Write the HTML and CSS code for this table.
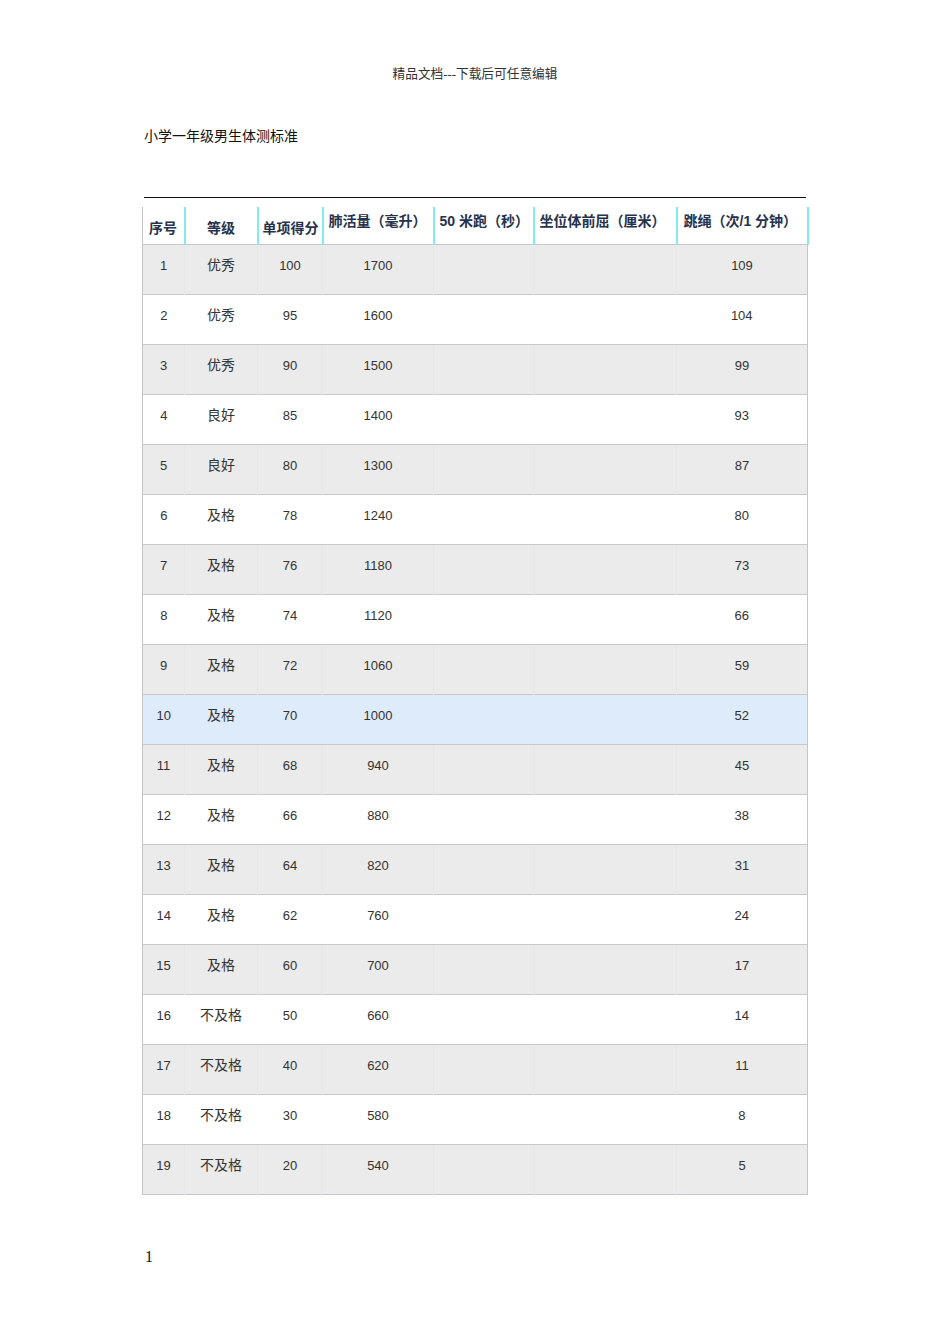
FILE: index.html
```html
<!DOCTYPE html>
<html lang="zh">
<head>
<meta charset="utf-8">
<title>小学一年级男生体测标准</title>
<link rel="stylesheet" href="styles.css">
</head>
<body>
<div class="page">
  <div class="doc-header">精品文档---下载后可任意编辑</div>
  <h1 class="title">小学一年级男生体测标准</h1>
  <div class="rule"></div>
  <table class="grid">
    <colgroup>
      <col class="c1"><col class="c2"><col class="c3"><col class="c4"><col class="c5"><col class="c6"><col class="c7">
    </colgroup>
    <thead>
      <tr>
        <th class="low first">序号</th>
        <th class="low center">等级</th>
        <th class="low">单项得分</th>
        <th>肺活量（毫升）</th>
        <th>50 米跑（秒）</th>
        <th>坐位体前屈（厘米）</th>
        <th class="last">跳绳（次/1 分钟）</th>
      </tr>
    </thead>
    <tbody>
      <tr class="odd"><td>1</td><td class="cjk">优秀</td><td>100</td><td>1700</td><td></td><td></td><td>109</td></tr>
      <tr><td>2</td><td class="cjk">优秀</td><td>95</td><td>1600</td><td></td><td></td><td>104</td></tr>
      <tr class="odd"><td>3</td><td class="cjk">优秀</td><td>90</td><td>1500</td><td></td><td></td><td>99</td></tr>
      <tr><td>4</td><td class="cjk">良好</td><td>85</td><td>1400</td><td></td><td></td><td>93</td></tr>
      <tr class="odd"><td>5</td><td class="cjk">良好</td><td>80</td><td>1300</td><td></td><td></td><td>87</td></tr>
      <tr><td>6</td><td class="cjk">及格</td><td>78</td><td>1240</td><td></td><td></td><td>80</td></tr>
      <tr class="odd"><td>7</td><td class="cjk">及格</td><td>76</td><td>1180</td><td></td><td></td><td>73</td></tr>
      <tr><td>8</td><td class="cjk">及格</td><td>74</td><td>1120</td><td></td><td></td><td>66</td></tr>
      <tr class="odd"><td>9</td><td class="cjk">及格</td><td>72</td><td>1060</td><td></td><td></td><td>59</td></tr>
      <tr class="hl"><td>10</td><td class="cjk">及格</td><td>70</td><td>1000</td><td></td><td></td><td>52</td></tr>
      <tr class="odd"><td>11</td><td class="cjk">及格</td><td>68</td><td>940</td><td></td><td></td><td>45</td></tr>
      <tr><td>12</td><td class="cjk">及格</td><td>66</td><td>880</td><td></td><td></td><td>38</td></tr>
      <tr class="odd"><td>13</td><td class="cjk">及格</td><td>64</td><td>820</td><td></td><td></td><td>31</td></tr>
      <tr><td>14</td><td class="cjk">及格</td><td>62</td><td>760</td><td></td><td></td><td>24</td></tr>
      <tr class="odd"><td>15</td><td class="cjk">及格</td><td>60</td><td>700</td><td></td><td></td><td>17</td></tr>
      <tr><td>16</td><td class="cjk">不及格</td><td>50</td><td>660</td><td></td><td></td><td>14</td></tr>
      <tr class="odd"><td>17</td><td class="cjk">不及格</td><td>40</td><td>620</td><td></td><td></td><td>11</td></tr>
      <tr><td>18</td><td class="cjk">不及格</td><td>30</td><td>580</td><td></td><td></td><td>8</td></tr>
      <tr class="odd"><td>19</td><td class="cjk">不及格</td><td>20</td><td>540</td><td></td><td></td><td>5</td></tr>
    </tbody>
  </table>
  <div class="page-num">1</div>
</div>
</body>
</html>
```

FILE: styles.css
```css
html, body {
  margin: 0;
  padding: 0;
  background: #ffffff;
}

.page {
  width: 950px;
  min-height: 1344px;
  padding: 66px 0 0 142px;
  box-sizing: border-box;
  font-family: "Liberation Sans", "Noto Sans CJK SC", sans-serif;
  color: #222;
}

.doc-header {
  width: 666px;
  text-align: center;
  font-family: "Liberation Serif", "Noto Sans CJK SC", serif;
  font-size: 12.7px;
  line-height: 17px;
  color: #333;
}

.title {
  margin: 44px 0 0 2px;
  font-size: 14px;
  line-height: 18px;
  font-weight: normal;
  color: #111;
}

.rule {
  margin: 52px 0 0 2px;
  width: 662px;
  height: 0;
  border-top: 1.5px solid #111;
}

.grid {
  margin-top: 9px;
  width: 665px;
  table-layout: fixed;
  border-collapse: collapse;
  border-left: 1.5px solid #c4c4c4;
  border-bottom: 1.5px solid #c0c6d2;
}

.c1 { width: 42px; }
.c2 { width: 73px; }
.c3 { width: 65px; }
.c4 { width: 111px; }
.c5 { width: 100px; }
.c6 { width: 143px; }
.c7 { width: 131px; }

.grid th {
  height: 37px;
  padding: 5px 0 0 5px;
  box-sizing: border-box;
  vertical-align: top;
  text-align: left;
  font-size: 14px;
  line-height: 18px;
  font-weight: bold;
  color: #26324c;
  white-space: nowrap;
  background: #fff;
  border-left: 2px solid #84eaf0;
}

.grid th.low {
  vertical-align: middle;
  padding: 5px 0 0 4px;
}

.grid th.first {
  border-left: none;
  padding-left: 6px;
}

.grid th.center {
  text-align: center;
  padding-left: 0;
}

.grid th.last {
  border-right: 2px solid #84eaf0;
  padding-left: 6px;
}

.grid td {
  height: 50px;
  padding: 13px 0 0;
  box-sizing: border-box;
  vertical-align: top;
  text-align: center;
  font-size: 13px;
  line-height: 16px;
  color: #333;
  border-top: 1.5px solid #c8c8c8;
}

.grid td.cjk {
  font-size: 14px;
  padding-top: 12px;
  line-height: 17px;
}

.grid td:last-child {
  border-right: 1.5px solid #c0c6d2;
}

.grid tr.odd td {
  background: #ebebeb;
}

.grid tr.odd td + td {
  border-left: 1px solid #e7e7e7;
}

.grid tr.hl td {
  background: #deebfb;
}

.page-num {
  margin: 53px 0 0 3px;
  font-family: "Liberation Serif", serif;
  font-size: 16px;
  line-height: 18px;
  color: #111;
}
```
